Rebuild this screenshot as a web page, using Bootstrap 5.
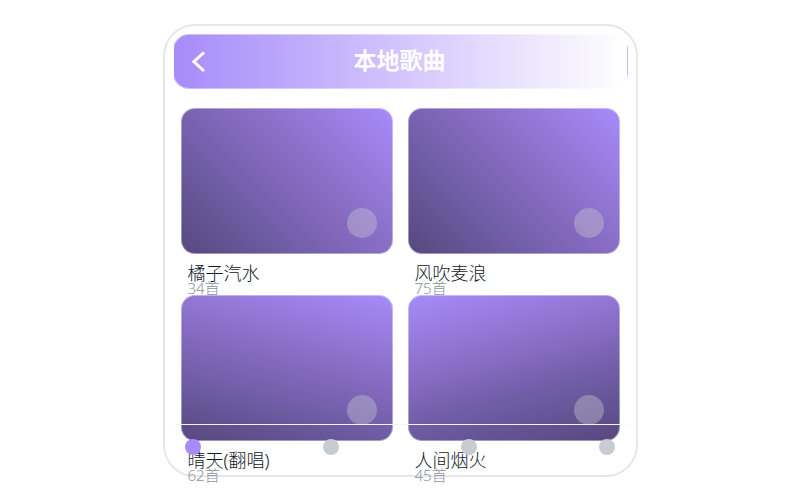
<!DOCTYPE html>
<html lang="zh-CN">
<head>
<meta charset="utf-8">
<meta name="viewport" content="width=device-width, initial-scale=1">
<title>本地歌曲</title>
<link href="https://cdn.jsdelivr.net/npm/bootstrap@5.3.0/dist/css/bootstrap.min.css" rel="stylesheet">
<style>
  body { padding-top: 24px; font-family: "Noto Sans", "Noto Sans CJK SC", sans-serif; background: #fff; }
  .phone { width: 100%; max-width: 475px; height: calc(100vh - 47px); padding: 8px; border: 2px solid #e7e7eb; border-radius: 32px; background: #fff; }
  .topbar { height: 55px; padding: 0 18px; border: 1px solid rgba(255,255,255,.4); border-radius: 16px; background: linear-gradient(90deg, #a78bfa, #fff); color: #fff; }
  .topbar h1 { font-size: 23px; line-height: 32px; font-weight: 700; padding: 0 15px 4px 0; }
  .back { width: 14px; height: 22px; line-height: 0; }
  .albums { display: grid; grid-template-columns: 1fr 1fr; column-gap: 15px; padding: 19px 8px 0; }
  .album { height: 187px; }
  .cover { height: 146px; border: 1px solid rgba(255,255,255,.4); border-radius: 14px; background-origin: border-box; }
  .cover-a { background-image: linear-gradient(45deg, #56487d, #7460ac 36%, #856abf 54%, #a78bfa); }
  .cover-b { background-image: linear-gradient(15deg, #56487d, #7460ac 36%, #856abf 54%, #a78bfa); }
  .cover-c { background-image: linear-gradient(165deg, #a78bfa, #856abf 46%, #7460ac 60%, #56487d); }
  .disc { right: 15px; bottom: 15px; width: 30px; height: 30px; background: rgba(200,200,210,.4); }
  .song { padding: 8px 7px 0; }
  .song h2 { font-size: 18px; line-height: 22px; font-weight: 300; color: #111827; }
  .song p { font-size: 15px; line-height: 9px; font-weight: 300; color: #8b93a1; }
  .tabs { left: 10px; right: 10px; bottom: 0; height: 51px; padding: 14px 10px 0; border-top: 1px solid #f3f4f6; }
  .dot { width: 16px; height: 16px; background: #c7cbd3; }
  .dot-on { background: #a78bfa; }
</style>
</head>
<body class="min-vh-100">
<main class="phone position-relative mx-auto">
  <header class="topbar d-flex align-items-center">
    <button type="button" class="back btn p-0 border-0" aria-label="返回">
      <svg width="14" height="22" viewBox="0 0 14 22" fill="none" stroke="#fff" stroke-width="3"><path d="M12 1.500L1.800 10.700L12 20"/></svg>
    </button>
    <h1 class="flex-fill text-center m-0">本地歌曲</h1>
  </header>
  <section class="albums">
    <article class="album"><div class="cover cover-a position-relative"><span class="disc position-absolute rounded-circle"></span></div><div class="song"><h2 class="m-0">橘子汽水</h2><p class="m-0">34首</p></div></article>
    <article class="album"><div class="cover cover-a position-relative"><span class="disc position-absolute rounded-circle"></span></div><div class="song"><h2 class="m-0">风吹麦浪</h2><p class="m-0">75首</p></div></article>
    <article class="album"><div class="cover cover-b position-relative"><span class="disc position-absolute rounded-circle"></span></div><div class="song"><h2 class="m-0">晴天(翻唱)</h2><p class="m-0">62首</p></div></article>
    <article class="album"><div class="cover cover-c position-relative"><span class="disc position-absolute rounded-circle"></span></div><div class="song"><h2 class="m-0">人间烟火</h2><p class="m-0">45首</p></div></article>
  </section>
  <nav class="tabs position-absolute d-flex justify-content-between align-items-start" aria-label="主导航">
    <button type="button" class="dot dot-on btn p-0 border-0 rounded-circle" aria-label="首页"></button>
    <button type="button" class="dot btn p-0 border-0 rounded-circle" aria-label="发现"></button>
    <button type="button" class="dot btn p-0 border-0 rounded-circle" aria-label="音乐"></button>
    <button type="button" class="dot btn p-0 border-0 rounded-circle" aria-label="我的"></button>
  </nav>
</main>
<script src="https://cdn.jsdelivr.net/npm/bootstrap@5.3.0/dist/js/bootstrap.bundle.min.js"></script>
</body>
</html>
